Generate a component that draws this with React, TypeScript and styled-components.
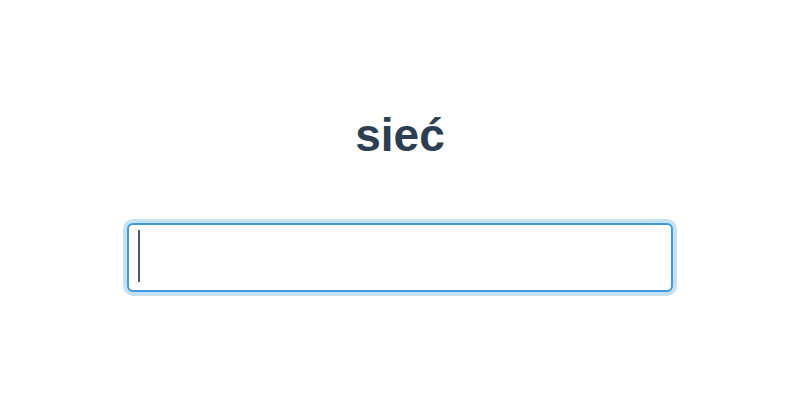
import React, { useEffect, useRef } from 'react';
import styled, { createGlobalStyle } from 'styled-components';

const GlobalStyle = createGlobalStyle`
  html, body {
    margin: 0;
    padding: 0;
    background: #ffffff;
  }
  body {
    font-family: "Liberation Sans", Arial, Helvetica, sans-serif;
    color: #2c3e50;
  }
`;

const Page = styled.div`
  height: 400px;
  display: flex;
  flex-direction: column;
  align-items: center;
  justify-content: center;
`;

const Word = styled.h1`
  margin: 0 0 61px;
  font-size: 46px;
  line-height: 53px;
  font-weight: 700;
  color: #2c3e50;
`;

const Field = styled.div`
  position: relative;
  width: 546px;
  height: 69px;
`;

const AnswerInput = styled.input`
  box-sizing: border-box;
  width: 100%;
  height: 100%;
  padding: 0 9px;
  font-family: "Liberation Sans", Arial, sans-serif;
  font-size: 45px;
  color: #2c3e50;
  caret-color: transparent;
  border: 2px solid #3f98e0;
  border-radius: 6px;
  outline: none;
  box-shadow: 0 0 0 4px rgba(66, 153, 225, 0.3);
  background: #fff;
`;

// headless screenshots don't paint the blinking caret, so draw it
const Caret = styled.span`
  position: absolute;
  left: 11px;
  top: 7px;
  width: 2px;
  height: 52px;
  background: #4b5a6b;
  pointer-events: none;
`;

const App: React.FC = () => {
  const inputRef = useRef<HTMLInputElement>(null);

  useEffect(() => {
    inputRef.current?.focus();
  }, []);

  return <>
    <GlobalStyle />
    <Page>
      <Word>sieć</Word>
      <Field>
        <AnswerInput ref={inputRef} type='text' autoFocus />
        <Caret />
      </Field>
    </Page>
  </>;
};

export default App;
